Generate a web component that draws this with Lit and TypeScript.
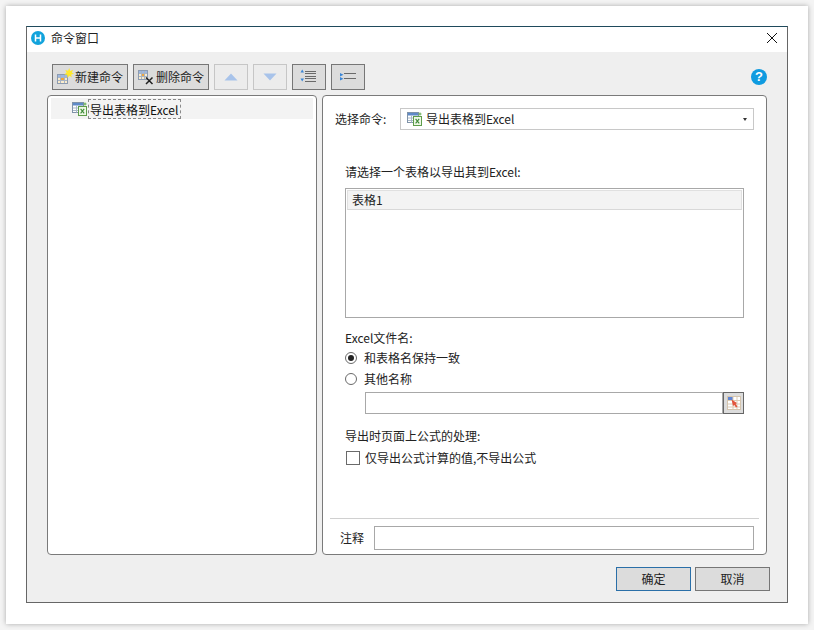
import { LitElement, html, css } from "lit";
import { customElement } from "lit/decorators.js";

const excelIcon = html`<svg class="ico" width="16" height="16" viewBox="0 0 16 16">
  <rect x="0.5" y="1.5" width="11" height="10" fill="#fff" stroke="#7f92a8"/>
  <rect x="1" y="2" width="10" height="2.5" fill="#5f8ac8"/>
  <path d="M1 7h10M1 9.5h10M4.5 4.5v7M8 4.5v7" stroke="#a9b8c8" fill="none"/>
  <rect x="6.5" y="5.5" width="8" height="9" fill="#eef8e6" stroke="#5e9c4a"/>
  <path d="M8.6 7.8l3.6 4.6M12.2 7.8l-3.6 4.6" stroke="#3f8a38" stroke-width="1.1" fill="none"/>
  <path d="M13 1.5v3M11.5 3h3" stroke="#5ea94a" stroke-width="1" fill="none"/>
</svg>`;

const newIcon = html`<svg class="ico" width="18" height="18" viewBox="0 0 18 18">
  <rect x="1.5" y="6.500" width="10" height="9" fill="#fbeccb" stroke="#8c9bb0"/>
  <rect x="2" y="7" width="9" height="2" fill="#9db8e2"/>
  <rect x="5" y="9.500" width="3" height="2.500" fill="#f0a53c"/>
  <path d="M2 9.500h9M2 12.500h9M4.500 7v8M8.500 7v8" stroke="#a8b4c4" fill="none"/>
  <path d="M13.200 0l1 2.900 2.900-1.100-1.300 2.700 2.200 1.300-2.800.7.600 2.900-2.300-1.700-2 2-.3-2.900-2.800-.3 2.200-1.900-1.300-2.600 2.800.8z" fill="#ffe92e"/>
</svg>`;

const delIcon = html`<svg class="ico" width="18" height="18" viewBox="0 0 18 18">
  <rect x="1.500" y="2.500" width="9" height="9" fill="#fbeccb" stroke="#8c9bb0"/>
  <rect x="2" y="3" width="8" height="2" fill="#9db8e2"/>
  <rect x="4.500" y="5.500" width="3" height="2.500" fill="#f0a53c"/>
  <path d="M2 5.500h8M2 8.500h8M4.500 3v8M7.500 3v8" stroke="#a8b4c4" fill="none"/>
  <path d="M9 9.500l6.500 6.500M15.500 9.500L9 16" stroke="#222" stroke-width="1.500" fill="none"/>
</svg>`;

const up = html`<svg width="14" height="8" viewBox="0 0 14 8"><path d="M7 .5L13.500 7.500H.5z" fill="#a8c3ea"/></svg>`;
const down = html`<svg width="14" height="8" viewBox="0 0 14 8"><path d="M7 7.500L13.500 .5H.5z" fill="#a8c3ea"/></svg>`;

const indentA = html`<svg width="18" height="18" viewBox="0 0 18 18">
  <path d="M.5 4.500L2.200 1.500 4 4.500zM.5 10.500L2.200 13.500 4 10.500z" fill="#3b86d6"/>
  <path d="M5 3.500h11M5 5.500h11M5 8.500h11M5 10.500h11M5 13.500h11" stroke="#6a6a6a" fill="none"/>
</svg>`;
const indentB = html`<svg width="18" height="18" viewBox="0 0 18 18">
  <path d="M1 5l3.500 1.700L1 8.400zM1 9l3.500 1.700L1 12.400z" fill="#3b86d6"/>
  <path d="M5 5.500h12M5 10.500h12" stroke="#6a6a6a" fill="none"/>
</svg>`;

const pickIcon = html`<svg width="16" height="16" viewBox="0 0 16 16">
  <rect x="1.500" y="1.500" width="13" height="13" fill="#fff" stroke="#d4c4ae"/>
  <rect x="2" y="2" width="5" height="3" fill="#5f86d6"/>
  <path d="M2 5.500h12M2 9h12M2 12h12M7 2v12M11 2v12" stroke="#dccbb5" fill="none"/>
  <path d="M5.500 4.500l5.500 3.500-1.300 1 1.800 2.500-1.500 1-1.700-2.500-1.300 1z" fill="#e2563d"/>
</svg>`;

@customElement("app-root")
export class AppRoot extends LitElement {
  static styles = css`
    :host { display: block; width: 814px; height: 630px; background: #f4f4f4; font: 12px/16px "Noto Sans CJK SC", "Open Sans", sans-serif; color: #222; overflow: hidden; }
    * { box-sizing: border-box; }
    .sheet { margin: 6px 6px 0 6px; width: 802px; height: 618px; padding: 20px; background: #fff; box-shadow: 0 0 5px rgba(0,0,0,.3); }
    .win { width: 762px; height: 577px; border: 1px solid #666; border-top-color: #1f4a5c; display: flex; flex-direction: column; background: #efefef; }
    .title { height: 25px; flex: none; background: #fff; display: flex; align-items: center; padding: 0 9px 0 4px; gap: 6px; }
    .title .grow { flex: 1; }
    .logo { width: 14px; height: 14px; border-radius: 50%; background: #12a3dc; display: flex; align-items: center; justify-content: center; margin-top: -3px; }
    .title span { color: #222; margin-top: -4px; }
    .close { display: block; margin-top: -3px; }
    .body { flex: 1; padding: 12px 20px 0; display: flex; flex-direction: column; }
    .tools { display: flex; height: 26px; padding-left: 5px; gap: 5px; align-items: center; }
    .btn { height: 26px; border: 1px solid #767676; background: #dcdcdc; display: flex; align-items: center; justify-content: center; color: #222; }
    .cmd { width: 76px; padding-left: 3px; gap: 1px; justify-content: flex-start; }
    .arrow { width: 34px; background: #ececec; border-color: #c6c6c6; }
    .ind { width: 34px; }
    .ico { flex: none; display: block; }
    .help { margin-left: auto; width: 16px; height: 16px; border-radius: 50%; background: #0f9be0; color: #fff; font: bold 13px/16px "Liberation Sans", sans-serif; text-align: center; }
    .panels { display: flex; gap: 5px; margin-top: 5px; height: 460px; }
    .panel { background: #fff; border: 1px solid #7a7a7a; border-radius: 4px; height: 460px; }
    .left { width: 270px; padding: 2px 3px; }
    .treerow { height: 21px; background: #f3f3f3; display: flex; align-items: center; padding-left: 21px; }
    .treerow .txt { height: 20px; border: 1px dashed #8a8a8a; padding: 0 1px; line-height: 19px; width: 93px; white-space: nowrap; overflow: hidden; color: #111; }
    .right { width: 445px; display: flex; flex-direction: column; padding-top: 12px; }
    .selrow { display: flex; align-items: center; padding-left: 12px; height: 22px; }
    .selrow label { width: 65px; }
    .select { width: 354px; height: 22px; background: #fff; border: 1px solid #c8c8c8; display: flex; align-items: center; padding: 0 6px; gap: 3px; }
    .select .caret { margin-left: auto; width: 0; height: 0; border-left: 2.5px solid transparent; border-right: 2.5px solid transparent; border-top: 3px solid #333; }
    .sec { padding-left: 22px; }
    .lbl { display: block; height: 16px; }
    .m1 { margin-top: 34px; }
    .list { margin-top: 8px; width: 399px; height: 130px; border: 1px solid #a8a8a8; padding: 1px; }
    .row { height: 20px; background: #f3f3f3; border: 1px solid #e0e0e0; border-bottom-color: #d8d8d8; padding-left: 4px; line-height: 18px; }
    .m2 { margin-top: 12px; }
    .radio { display: flex; align-items: center; gap: 7px; height: 16px; margin-top: 5px; }
    .radio.first { margin-top: 4px; }
    .dot { width: 12px; height: 12px; border-radius: 50%; border: 1px solid #6a6a6a; background: #fff; display: flex; align-items: center; justify-content: center; flex: none; }
    .dot i { display: block; width: 6px; height: 6px; border-radius: 50%; background: #222; }
    .fileline { display: flex; margin: 5px 0 0 20px; height: 22px; }
    .fileline .inp { width: 358px; height: 22px; border: 1px solid #a8a8a8; background: #fff; }
    .pick { width: 21px; height: 22px; border: 1px solid #666; background: #dcdcdc; display: flex; align-items: center; justify-content: center; }
    .m3 { margin-top: 14px; }
    .check { display: flex; align-items: center; gap: 5px; height: 16px; margin-top: 6px; padding-left: 1px; }
    .box { width: 14px; height: 14px; border: 1px solid #6a6a6a; background: #fff; flex: none; }
    .grow { flex: 1; }
    .note { margin: 0 7px; border-top: 1px solid #d0d0d0; height: 36px; display: flex; align-items: flex-start; padding-top: 7px; }
    .note span { margin: 4px 0 0 10px; width: 34px; }
    .note .inp { width: 380px; height: 24px; border: 1px solid #a8a8a8; background: #fff; }
    .foot { display: flex; justify-content: flex-end; gap: 4px; margin: 12px -3px 0 0; }
    .foot .btn { width: 75px; height: 24px; }
    .foot .ok { border-color: #2a6fa8; }
  `;

  render() {
    return html`<div class="sheet"><div class="win">
      <div class="title">
        <div class="logo"><svg width="10" height="10" viewBox="0 0 10 10"><path d="M2.500 1.500v7M7.500 1.500v7M2.500 5h5" stroke="#fff" stroke-width="1.500" fill="none"/></svg></div>
        <span>命令窗口</span><div class="grow"></div>
        <svg class="close" width="12" height="12" viewBox="0 0 12 12"><path d="M1 1l10 10M11 1L1 11" stroke="#111" stroke-width="1" fill="none"/></svg>
      </div>
      <div class="body">
        <div class="tools">
          <div class="btn cmd">${newIcon}<span>新建命令</span></div>
          <div class="btn cmd">${delIcon}<span>删除命令</span></div>
          <div class="btn arrow">${up}</div>
          <div class="btn arrow">${down}</div>
          <div class="btn ind">${indentA}</div>
          <div class="btn ind">${indentB}</div>
          <div class="help">?</div>
        </div>
        <div class="panels">
          <div class="panel left">
            <div class="treerow">${excelIcon}<div class="txt">导出表格到Excel</div></div>
          </div>
          <div class="panel right">
            <div class="selrow"><label>选择命令:</label>
              <div class="select">${excelIcon}<span>导出表格到Excel</span><i class="caret"></i></div>
            </div>
            <div class="sec">
              <span class="lbl m1">请选择一个表格以导出其到Excel:</span>
              <div class="list"><div class="row">表格1</div></div>
              <span class="lbl m2">Excel文件名:</span>
              <div class="radio first"><div class="dot"><i></i></div><span>和表格名保持一致</span></div>
              <div class="radio"><div class="dot"></div><span>其他名称</span></div>
              <div class="fileline"><div class="inp"></div><div class="pick">${pickIcon}</div></div>
              <span class="lbl m3">导出时页面上公式的处理:</span>
              <div class="check"><div class="box"></div><span>仅导出公式计算的值,不导出公式</span></div>
            </div>
            <div class="grow"></div>
            <div class="note"><span>注释</span><div class="inp"></div></div>
          </div>
        </div>
        <div class="foot"><div class="btn ok">确定</div><div class="btn">取消</div></div>
      </div>
    </div></div>`;
  }
}
